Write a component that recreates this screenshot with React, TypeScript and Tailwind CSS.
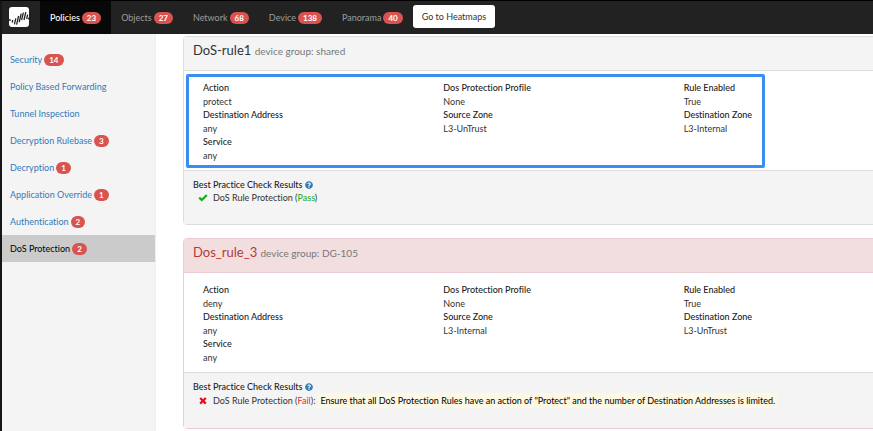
import { FaQuestionCircle } from "react-icons/fa";

const tabs = [
  { name: "Policies", count: 23 },
  { name: "Objects", count: 27 },
  { name: "Network", count: 68 },
  { name: "Device", count: 138 },
  { name: "Panorama", count: 40 },
];

const sections = [
  { name: "Security", count: 14 },
  { name: "Policy Based Forwarding", count: 0 },
  { name: "Tunnel Inspection", count: 0 },
  { name: "Decryption Rulebase", count: 3 },
  { name: "Decryption", count: 1 },
  { name: "Application Override", count: 1 },
  { name: "Authentication", count: 2 },
  { name: "DoS Protection", count: 2 },
];

const rules = [
  {
    name: "DoS-rule1",
    group: "shared",
    passed: true,
    selected: true,
    message: "",
    fields: [
      ["Action", "protect"],
      ["Dos Protection Profile", "None"],
      ["Rule Enabled", "True"],
      ["Destination Address", "any"],
      ["Source Zone", "L3-UnTrust"],
      ["Destination Zone", "L3-Internal"],
      ["Service", "any"],
    ],
  },
  {
    name: "Dos_rule_3",
    group: "DG-105",
    passed: false,
    selected: false,
    message:
      'Ensure that all DoS Protection Rules have an action of "Protect" and the number of Destination Addresses is limited.',
    fields: [
      ["Action", "deny"],
      ["Dos Protection Profile", "None"],
      ["Rule Enabled", "True"],
      ["Destination Address", "any"],
      ["Source Zone", "L3-Internal"],
      ["Destination Zone", "L3-UnTrust"],
      ["Service", "any"],
    ],
  },
];

type Rule = (typeof rules)[number];

const Badge = ({ count }: { count: number }) => (
  <span className="mt-px ml-0.5 inline-block rounded-full bg-[#d9534f] px-[5px] text-[8px] leading-3 font-bold text-white">
    {count}
  </span>
);

const Logo = () => (
  <svg viewBox="0 0 20 20" className="h-5 w-5" aria-hidden="true">
    <rect width="20" height="20" rx="3" fill="#fff" />
    <g stroke="#222" strokeWidth="1.3" fill="none">
      <path d="M0.6 12l0.6 2.2M3.8 13l-0.6 2.6M6.8 11.4l-1.4 6M9.6 9l-2 8.6M12.2 6.6l-2 8.6M14.4 5.6l-1.8 7.4M16.8 5.2l-1.8 7.8M18.6 7.6l-0.9 4.4M19.9 10.6l-0.3 1.8" />
    </g>
  </svg>
);

const StatusIcon = ({ passed }: { passed: boolean }) => (
  <svg viewBox="0 0 10 10" className="h-2.5 w-2.5" fill="none" aria-hidden="true">
    {passed ? (
      <path d="M1.2 4.6l2.6 2.4 5-5" stroke="#18a818" strokeWidth="2.2" />
    ) : (
      <path d="M2.2 2l5.6 5.6M7.8 2l-5.6 5.6" stroke="#e60f1e" strokeWidth="2.3" />
    )}
  </svg>
);

const RulePanel = ({ rule }: { rule: Rule }) => (
  <section
    className={`-mr-20 rounded-sm border ${rule.passed ? "border-[#dddddd]" : "border-[#ebccd1]"}`}
  >
    <header
      className={`flex h-[34px] items-center border-b px-[9px] pb-1.5 ${
        rule.passed ? "border-[#dddddd] bg-[#f4f4f4]" : "border-[#ebccd1] bg-[#f2dede]"
      }`}
    >
      <h2 className={`text-[13px] leading-4 ${rule.passed ? "text-[#333333]" : "text-[#b33a38]"}`}>
        {rule.name}{" "}
        <small className="text-[10px] text-[#777777]">device group: {rule.group}</small>
      </h2>
    </header>

    <div className="relative pt-2.5 pr-7 pb-2 pl-[19px]">
      {rule.selected && (
        <div className="absolute top-[3px] bottom-0.5 left-0.5 w-[579px] rounded-xs border-3 border-[#378ef7]" />
      )}
      <dl className="grid grid-cols-3">
        {rule.fields.map(([label, value]) => (
          <div key={label}>
            <dt className="leading-[14px] font-medium text-[#222222]">{label}</dt>
            <dd className="leading-[13px]">{value}</dd>
          </div>
        ))}
      </dl>
    </div>

    <footer className="border-t border-[#dddddd] bg-[#f4f4f4] px-[9px] pt-[7px] pb-5">
      <h3 className="flex items-center gap-0.5 leading-[13px] font-medium text-[#222222]">
        Best Practice Check Results
        <FaQuestionCircle className="h-2 w-2 text-[#337ab7]" />
      </h3>
      <p className="flex items-center leading-[13px] whitespace-nowrap">
        <span className="flex w-5 justify-center">
          <StatusIcon passed={rule.passed} />
        </span>
        <span>
          DoS Rule Protection (
          <span className={rule.passed ? "text-[#18a818]" : "text-[#f52525]"}>
            {rule.passed ? "Pass" : "Fail"}
          </span>
          ){rule.message && ":"}
        </span>
        {rule.message && (
          <mark className="ml-[3px] bg-[#fcf8e3] px-0.5 leading-[15px] text-black">
            {rule.message}
          </mark>
        )}
      </p>
    </footer>
  </section>
);

const App = () => {
  return (
    <div className="flex h-screen flex-col overflow-hidden border-t border-l-2 border-t-black border-l-[#151515] bg-white font-['Lato',sans-serif] text-[9px] text-[#333333] [font-variant-ligatures:none]">
      <nav className="flex h-[33px] shrink-0 items-center bg-[#222222]">
        <a href="#home" aria-label="Home" className="mr-[11px] mb-0.5 ml-[7px]">
          <Logo />
        </a>
        {tabs.map((tab, index) => (
          <a
            key={tab.name}
            href={`#${tab.name.toLowerCase()}`}
            className={`flex h-full items-center px-2.5 ${
              index === 0 ? "bg-[#080808] font-medium text-white" : "text-[#9d9d9d]"
            }`}
          >
            {tab.name}
            <Badge count={tab.count} />
          </a>
        ))}
        <button
          type="button"
          className="mb-0.5 h-[23px] rounded-[3px] bg-white px-[9px] text-[#333333]"
        >
          Go to Heatmaps
        </button>
      </nav>

      <div className="flex min-h-0 flex-1">
        <aside className="w-[154px] shrink-0 border-r border-[#eeeeee] bg-[#f4f4f4] pt-3">
          {sections.map((section) => (
            <a
              key={section.name}
              href="#section"
              className={`flex h-[27px] items-center px-2 ${
                section.name === "DoS Protection"
                  ? "bg-[#cbcbcb] text-black"
                  : "text-[#337ab7]"
              }`}
            >
              {section.name}
              {section.count > 0 && <Badge count={section.count} />}
            </a>
          ))}
        </aside>

        <main className="flex min-w-0 flex-1 flex-col gap-[13px] overflow-hidden pt-0.5 pl-[27px]">
          {rules.map((rule) => (
            <RulePanel key={rule.name} rule={rule} />
          ))}
        </main>
      </div>
    </div>
  );
};

export default App;
